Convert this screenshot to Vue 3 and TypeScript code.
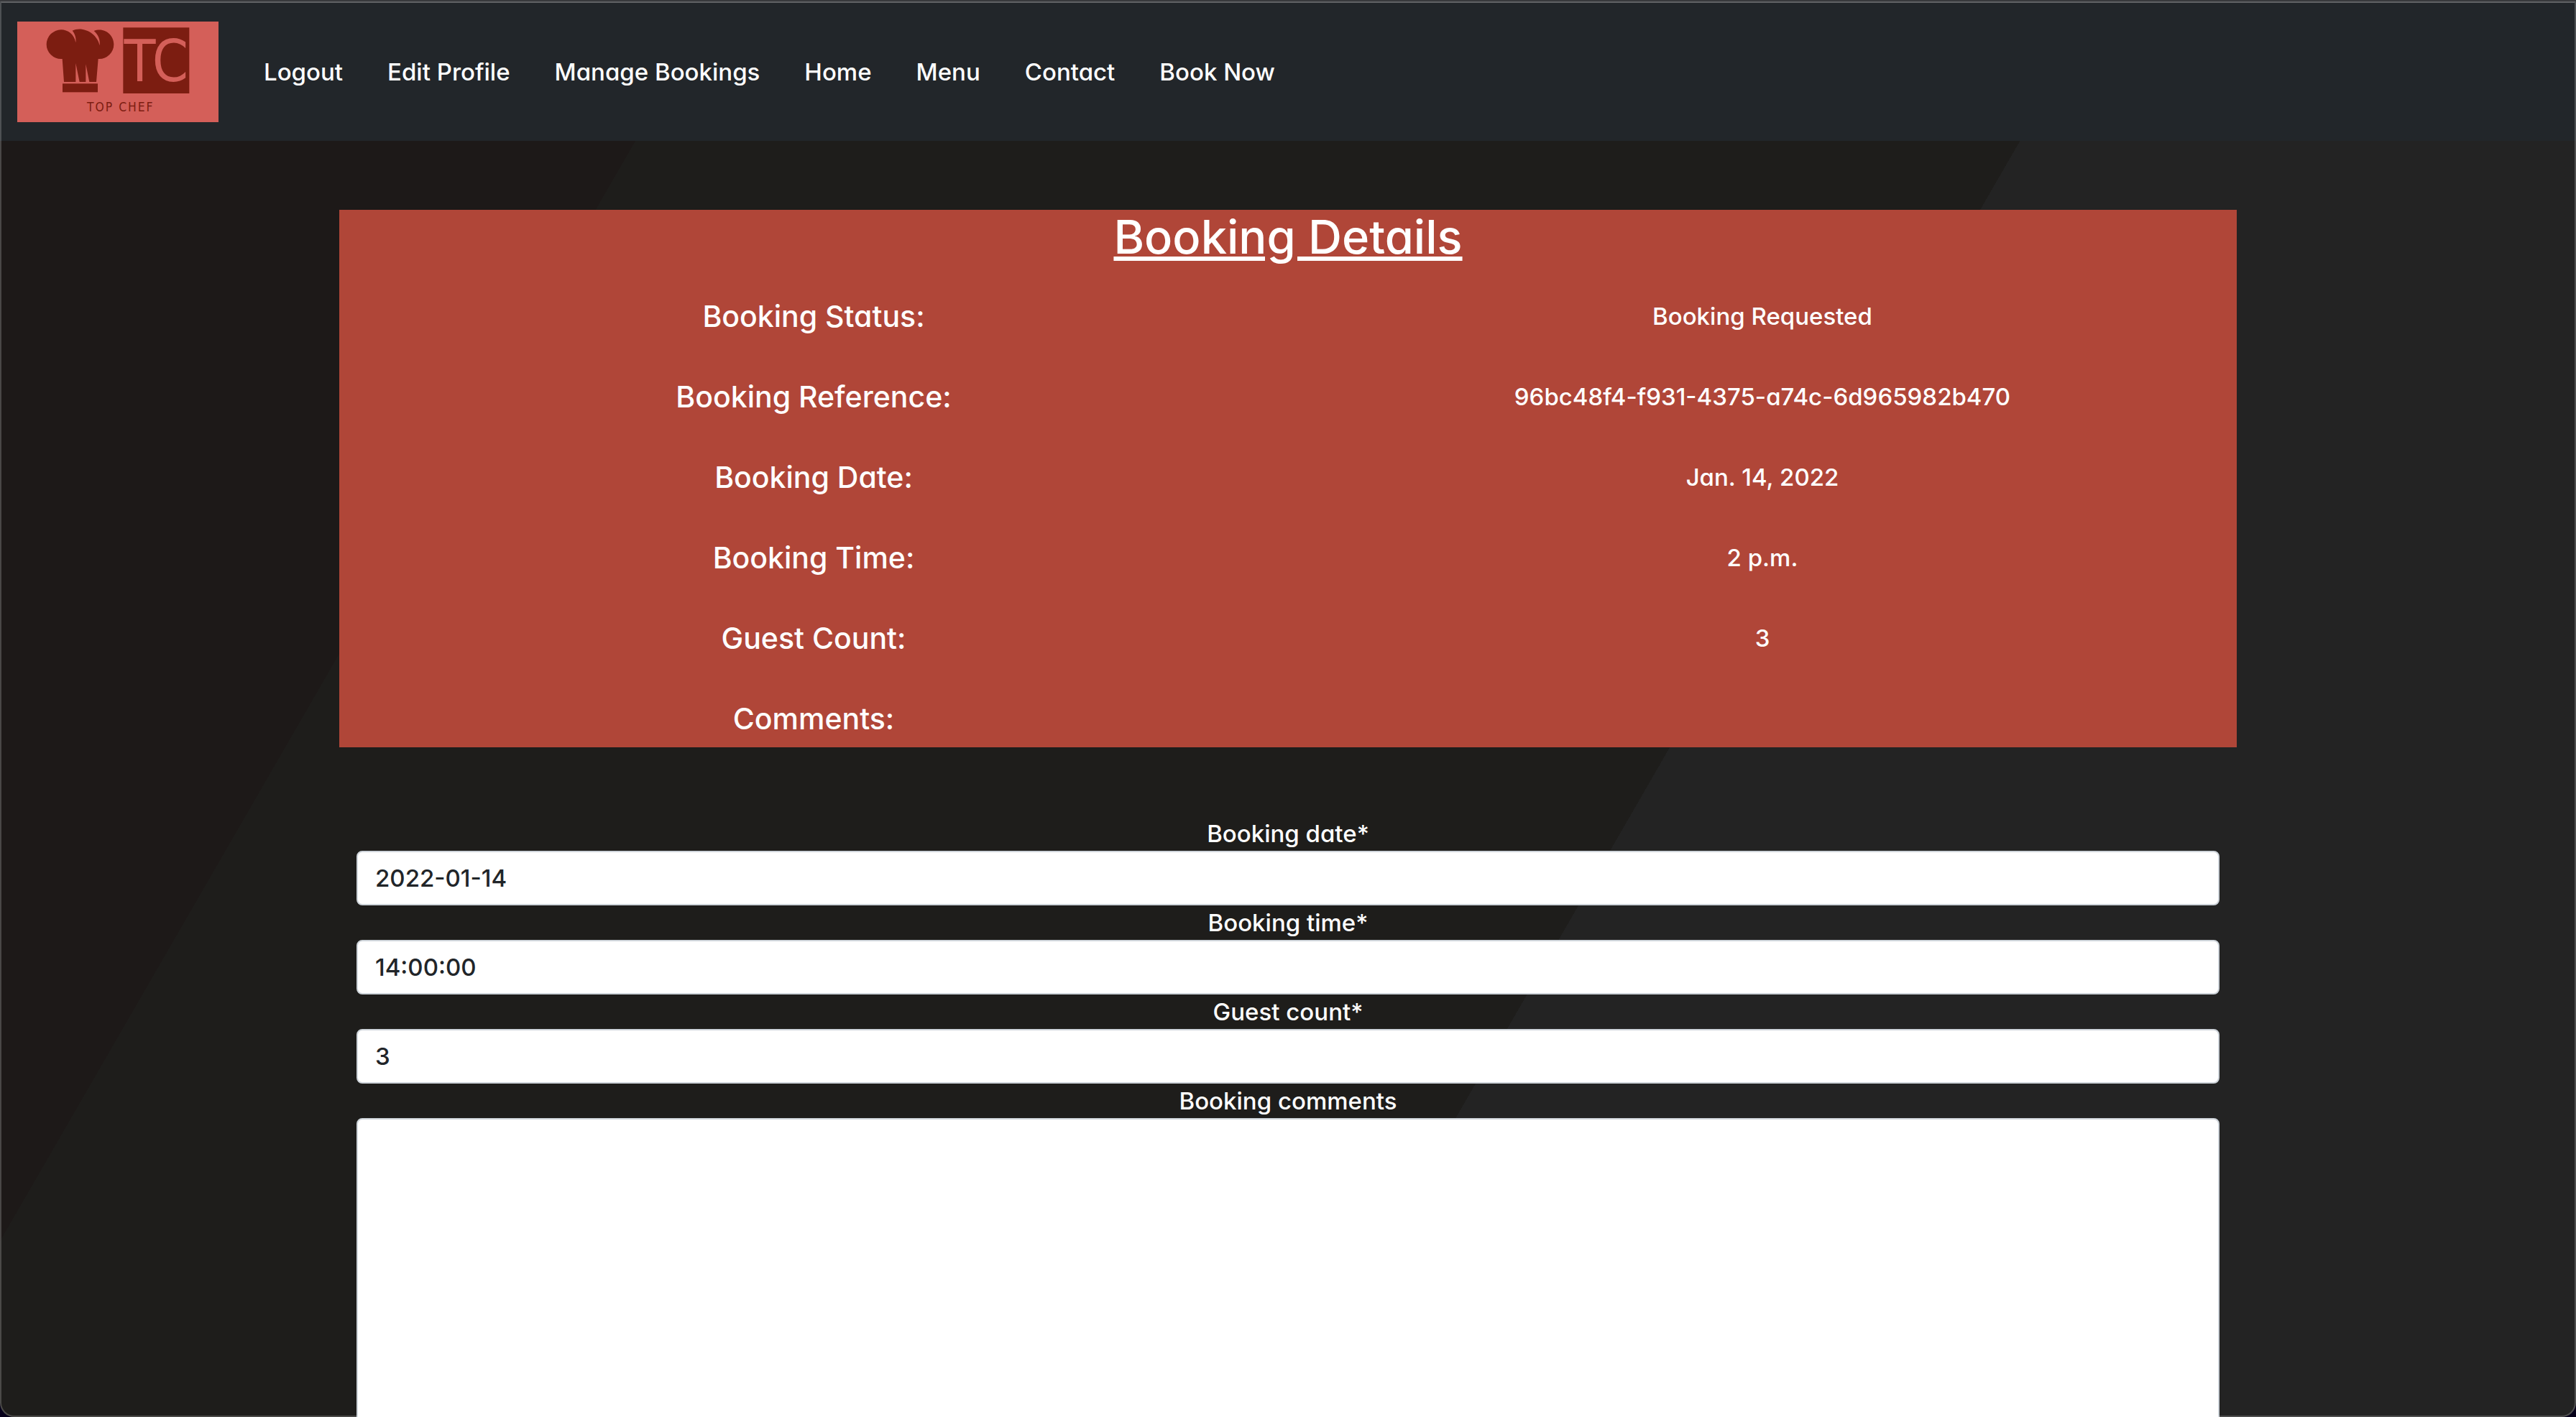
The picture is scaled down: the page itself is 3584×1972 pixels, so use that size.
<script setup lang="ts">
import { ref } from 'vue'

interface Detail {
  label: string
  value: string
}

const links: string[] = ['Logout', 'Edit Profile', 'Manage Bookings', 'Home', 'Menu', 'Contact', 'Book Now']

const details: Detail[] = [
  { label: 'Booking Status:', value: 'Booking Requested' },
  { label: 'Booking Reference:', value: '96bc48f4-f931-4375-a74c-6d965982b470' },
  { label: 'Booking Date:', value: 'Jan. 14, 2022' },
  { label: 'Booking Time:', value: '2 p.m.' },
  { label: 'Guest Count:', value: '3' },
  { label: 'Comments:', value: '' },
]

const bookingDate = ref('2022-01-14')
const bookingTime = ref('14:00:00')
const guestCount = ref('3')
const comments = ref('')
</script>

<template>
  <div class="page">
    <header class="navbar">
      <a class="brand" href="#" aria-label="Top Chef">
        <svg class="logo" viewBox="72 90 840 420">
          <rect x="72" y="90" width="840" height="420" fill="#d45f59" />
          <g fill="#7c1d11">
            <path
              d="M255 246A61 61 0 0 1 255 124C282 124 310 142 316 178C319 158 312 140 302 128C345 108 405 138 416 190C419 165 410 145 392 129C435 112 475 145 475 185A61 61 0 0 1 414 246H410L402 342H373L358 268V342H332L316 264V342H267L260 246Z"
            />
            <rect x="261" y="349" width="147" height="36" />
            <rect x="514" y="115" width="276" height="275" />
            <text class="tagline" x="363" y="464">TOP CHEF</text>
          </g>
          <text class="monogram" x="652" y="340" text-anchor="middle" fill="#d45f59">TC</text>
        </svg>
      </a>
      <nav class="links">
        <a v-for="link in links" :key="link" href="#">{{ link }}</a>
      </nav>
    </header>

    <main class="container">
      <section class="details">
        <h1>Booking Details</h1>
        <dl>
          <div v-for="item in details" :key="item.label" class="row">
            <dt>{{ item.label }}</dt>
            <dd>{{ item.value }}</dd>
          </div>
        </dl>
      </section>

      <form class="form" @submit.prevent>
        <label for="booking-date">Booking date*</label>
        <input id="booking-date" v-model="bookingDate" type="text" required />
        <label for="booking-time">Booking time*</label>
        <input id="booking-time" v-model="bookingTime" type="text" required />
        <label for="guest-count">Guest count*</label>
        <input id="guest-count" v-model="guestCount" type="text" required />
        <label for="booking-comments">Booking comments</label>
        <textarea id="booking-comments" v-model="comments" rows="10"></textarea>
      </form>
    </main>

    <div class="frame" aria-hidden="true"></div>
  </div>
</template>

<style>
body {
  margin: 0;
  background: #1e1d1b;
}
</style>

<style scoped>
.page {
  box-sizing: border-box;
  height: 100vh;
  overflow-y: auto;
  scrollbar-width: none;
  border-top: 2px solid #38393c;
  background: linear-gradient(120deg, #1d1918 21.1%, #1e1d1b 21.1%, #1e1d1b 61.9%, #232323 61.9%);
  color: #fff;
  font-family: Inter, "Liberation Sans", sans-serif;
  font-feature-settings: "cv11";
  font-size: 33px;
  font-weight: 500;
  line-height: 48px;
}

.navbar {
  display: flex;
  align-items: center;
  padding: 28px 24px 26px;
  background: #22262a;
}

.brand {
  display: block;
  margin-right: 32px;
}

.logo {
  display: block;
  width: 280px;
  height: 140px;
}

.monogram {
  font-family: "DejaVu Sans Condensed", sans-serif;
  font-size: 240px;
}

.tagline {
  font-family: "DejaVu Sans Condensed", sans-serif;
  font-size: 52px;
  letter-spacing: 6px;
}

.links {
  display: flex;
}

.links a {
  padding: 0 31px;
  color: #fff;
  text-decoration: none;
}

.container {
  box-sizing: border-box;
  max-width: 2640px;
  margin: 96px auto 0;
  text-align: center;
}

.details {
  background: #b04638;
}

h1 {
  margin: 0;
  padding-bottom: 16px;
  font-size: 65px;
  font-weight: 500;
  line-height: 76px;
  text-decoration: underline;
}

dl {
  margin: 0;
}

.row {
  display: grid;
  grid-template-columns: 1fr 1fr;
  padding: 32px 0;
}

.row:last-child {
  padding-bottom: 16px;
}

dt {
  font-size: 41px;
}

dd {
  margin: 0;
}

.form {
  display: flex;
  flex-direction: column;
  padding: 96px 24px;
}

input,
textarea {
  box-sizing: border-box;
  width: 100%;
  margin: 0;
  padding: 12px 24px;
  border: 2px solid #ced4da;
  border-radius: 8px;
  outline: none;
  background: #fff;
  color: #212529;
  font: inherit;
  font-feature-settings: inherit;
}

input {
  height: 76px;
}

textarea {
  display: block;
  resize: none;
}

/* Rounded window edge drawn over the page */
.frame {
  position: fixed;
  inset: 2px 0 0;
  border: 2px solid rgb(255 255 255 / 20%);
  border-top-color: #606265;
  border-radius: 0 0 20px 20px;
  box-shadow: 0 0 0 20px #06001a;
  clip-path: inset(0);
  pointer-events: none;
}
</style>
